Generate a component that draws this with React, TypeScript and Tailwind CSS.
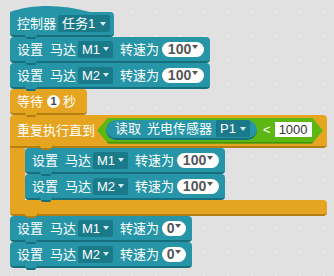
import type { ReactNode } from "react"

type Tone = "teal" | "orange"

const TONES: Record<Tone, { body: string; dark: string; border: string }> = {
  teal: { body: "bg-[#2695a7]", dark: "bg-[#166f7e]", border: "border-[#166f7e]" },
  orange: { body: "bg-[#e5a520]", dark: "bg-[#b47e10]", border: "border-[#b47e10]" },
}

// connector tab hanging under a block, drawn over the next one
function Tab({ tone, className = "left-[13px]" }: { tone: Tone; className?: string }) {
  const t = TONES[tone]
  return (
    <div
      className={`absolute -bottom-[4px] z-10 h-[6px] w-[16px] [clip-path:polygon(0_0,100%_0,calc(100%_-_4px)_100%,4px_100%)] ${t.dark} ${className}`}
    >
      <div className={`h-[4px] w-full [clip-path:polygon(0_0,100%_0,calc(100%_-_3px)_100%,3px_100%)] ${t.body}`} />
    </div>
  )
}

function Stmt({ tone, className, children }: { tone: Tone; className: string; children: ReactNode }) {
  const t = TONES[tone]
  return (
    <div className={`relative flex h-[26px] items-center rounded-[4px] border-b-2 pl-[7px] ${t.body} ${t.border} ${className}`}>
      {children}
      <Tab tone={tone} />
    </div>
  )
}

function Arrow({ dark = false }: { dark?: boolean }) {
  return (
    <span
      className={`inline-block h-0 w-0 border-x-[3.5px] border-t-[4px] border-x-transparent ${
        dark ? "border-t-[#555]" : "border-t-[#d6eef2]"
      }`}
    />
  )
}

function Drop({ label, className }: { label: string; className: string }) {
  return (
    <span className={`flex h-[17px] items-center justify-between rounded-[2px] bg-[#1a7a8a] pl-[4px] pr-[4px] ${className}`}>
      <span>{label}</span>
      <Arrow />
    </span>
  )
}

function Val({ v, className }: { v: string; className: string }) {
  return (
    <span className={`flex h-[15px] items-center justify-center gap-[1px] rounded-full bg-white ${className}`}>
      <span className="text-[14px] font-bold text-[#555]">{v}</span>
      <span className="mb-[5px] flex">
        <Arrow dark />
      </span>
    </span>
  )
}

function SetMotor({ m, v, className }: { m: string; v: string; className: string }) {
  return (
    <Stmt tone="teal" className={className}>
      <span>设置</span>
      <span className="ml-[7px]">马达</span>
      <Drop label={m} className="ml-[2px] w-[35px]" />
      <span className="ml-[7px]">转速为</span>
      <Val v={v} className={v === "0" ? "ml-[3px] w-[24px]" : "ml-[3px] w-[42px]"} />
    </Stmt>
  )
}

export default function App() {
  return (
    <div className="h-[276px] w-[334px] overflow-hidden bg-[#e0e1e0] bg-[radial-gradient(circle,#ececec_1px,transparent_1.5px)] bg-[size:24px_24px] pl-[10px] pt-[6px] font-['Liberation_Sans','Noto_Sans_CJK_SC',sans-serif] text-[13px] leading-none text-white">
      <div className="flex flex-col items-start">
        {/* hat block */}
        <div className="flex flex-col">
          <svg width="80" height="6" viewBox="0 0 80 6" className="block">
            <path d="M0 6 C 22 -2, 52 -2, 80 6 Z" fill="#2695a7" />
          </svg>
          <div className="relative flex h-[25px] w-[104px] items-center rounded-tr-[4px] rounded-b-[4px] border-b-2 border-[#166f7e] bg-[#2695a7] pl-[7px]">
            <span>控制器</span>
            <Drop label="任务1" className="ml-[2px] w-[52px]" />
            <Tab tone="teal" />
          </div>
        </div>

        <SetMotor m="M1" v="100" className="w-[200px]" />
        <SetMotor m="M2" v="100" className="w-[200px]" />

        <Stmt tone="orange" className="w-[77px]">
          <span>等待</span>
          <span className="ml-[4px] flex h-[13px] w-[13px] items-center justify-center rounded-full bg-white text-[11px] font-bold text-[#444]">
            1
          </span>
          <span className="ml-[3px]">秒</span>
        </Stmt>

        {/* repeat until */}
        <div className="flex w-[317px] flex-col">
          <div className="relative flex h-[33px] items-center rounded-t-[4px] rounded-br-[4px] border-b-2 border-[#b47e10] bg-[#e5a520] pl-[7px]">
            <span>重复执行直到</span>
            <div className="ml-[2px] flex h-[26px] w-[226px] items-center border-b-2 border-[#46900e] bg-[#5cb712] pl-[9px] [clip-path:polygon(0_50%,11px_0,calc(100%_-_11px)_0,100%_50%,calc(100%_-_11px)_100%,11px_100%)]">
              <div className="flex h-[20px] w-[151px] items-center rounded-full border-b-2 border-[#166f7e] bg-[#2695a7] pl-[9px]">
                <span>读取</span>
                <span className="ml-[6px]">光电传感器</span>
                <Drop label="P1" className="ml-[4px] h-[16px] w-[34px]" />
              </div>
              <span className="ml-[6px]">&lt;</span>
              <span className="ml-[4px] flex h-[15px] w-[37px] items-center justify-center bg-white text-[#333]">1000</span>
            </div>
            <Tab tone="orange" className="left-[28px]" />
          </div>
          <div className="flex">
            <div className="-mt-[2px] w-[15px] bg-[#e5a520]" />
            <div className="flex flex-col">
              <SetMotor m="M1" v="100" className="w-[200px]" />
              <SetMotor m="M2" v="100" className="w-[200px]" />
            </div>
          </div>
          <div className="relative h-[16px] rounded-b-[4px] rounded-tr-[4px] border-b-2 border-[#b47e10] bg-[#e5a520]">
            <Tab tone="orange" />
          </div>
        </div>

        <SetMotor m="M1" v="0" className="w-[182px]" />
        <SetMotor m="M2" v="0" className="w-[182px]" />
      </div>
    </div>
  )
}
